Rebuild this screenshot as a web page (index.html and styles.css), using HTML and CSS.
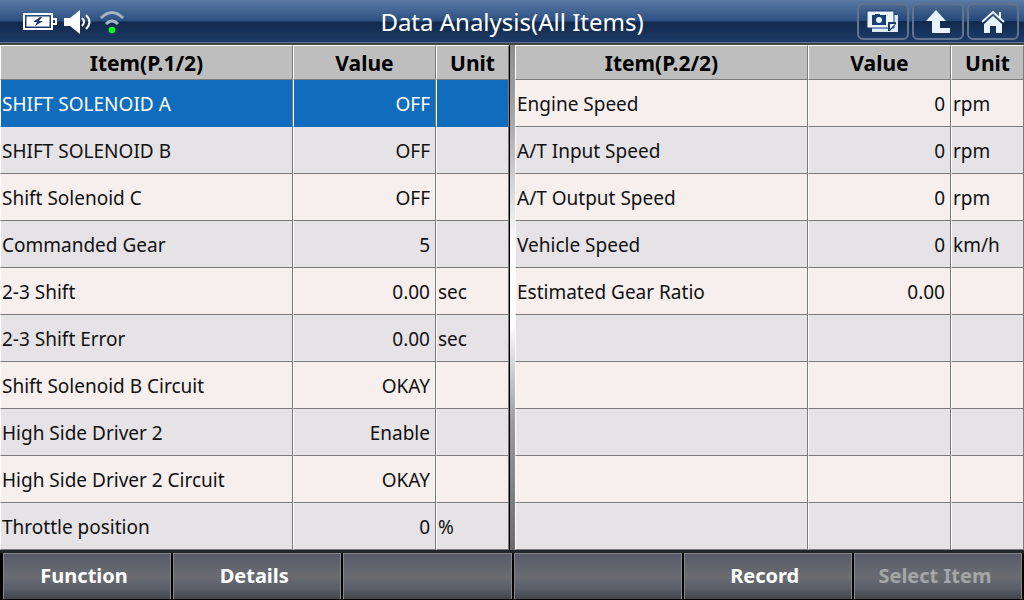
FILE: index.html
```html
<!DOCTYPE html>
<html lang="en">
<head>
    <meta charset="UTF-8">
    <title>Data Analysis</title>
    <link rel="stylesheet" href="styles.css">
</head>
<body>
<header class="top">
    <div class="status">
        <svg class="battery" width="34" height="18" viewBox="0 0 34 18">
            <rect x="1" y="1" width="28" height="15" fill="none" stroke="#fff" stroke-width="2"/>
            <rect x="3" y="3" width="24" height="11" fill="#fff" stroke="#1b3d70"/>
            <path d="M30 6h3v5h-3" fill="none" stroke="#fff" stroke-width="2"/>
            <path d="M17 4l-7 5h4l-2 4 8-5h-4l3-4z" fill="#1b3d70"/>
        </svg>
        <svg class="sound" width="28" height="24" viewBox="0 0 28 24">
            <path d="M0 8h6l10-8v24l-10-8H0z" fill="#fff"/>
            <path d="M18 8q4 4 0 8M22 5q7 7 0 14" fill="none" stroke="#fff" stroke-width="2"/>
        </svg>
        <svg class="wifi" width="28" height="24" viewBox="0 0 28 24">
            <path d="M2 8Q13-3 24 8M7 14q6-6 12 0" fill="none" stroke="#a6b4c9" stroke-width="3"/>
            <circle cx="13" cy="20" r="3.3" fill="#0f2"/>
        </svg>
    </div>
    <h1>Data Analysis(All Items)</h1>
    <nav class="tools">
        <button type="button" aria-label="Screenshots">
            <svg width="34" height="24" viewBox="0 0 34 24">
                <path d="M6 5h26v17H6z" fill="#dcebfa"/>
                <path d="M1 1h27v17H1z" fill="#e8f3fd" stroke="#1b3d70"/>
                <path d="M6 5h3V4h5v1h6v10H6z" fill="#1b3d70"/>
                <circle cx="13" cy="10" r="3" fill="#e8f3fd"/>
                <path d="M22 12h8v2l-6 7h-2z" fill="#1b3d70"/>
                <path d="M24 14h5l-5 5z" fill="#e8f3fd"/>
            </svg>
        </button>
        <button type="button" aria-label="Back">
            <svg width="26" height="26" viewBox="0 0 26 26">
                <path d="M11 1l10 11h-6v7h10v5H7V12H1z" fill="#e8f3fd"/>
            </svg>
        </button>
        <button type="button" aria-label="Home">
            <svg width="26" height="26" viewBox="0 0 26 26">
                <path d="M2 13L13 3l11 10M20 3v6" fill="none" stroke="#e8f3fd" stroke-width="2"/>
                <path d="M4 15l9-8 9 8v9h-6v-7h-6v7H4z" fill="#e8f3fd"/>
            </svg>
        </button>
    </nav>
</header>

<main class="data">
    <table>
        <colgroup><col><col class="col-value"><col class="col-unit"></colgroup>
        <thead>
            <tr><th>Item(P.1/2)</th><th>Value</th><th>Unit</th></tr>
        </thead>
        <tbody>
            <tr class="selected"><td>SHIFT SOLENOID A</td><td>OFF</td><td></td></tr>
            <tr><td>SHIFT SOLENOID B</td><td>OFF</td><td></td></tr>
            <tr><td>Shift Solenoid C</td><td>OFF</td><td></td></tr>
            <tr><td>Commanded Gear</td><td>5</td><td></td></tr>
            <tr><td>2-3 Shift</td><td>0.00</td><td>sec</td></tr>
            <tr><td>2-3 Shift Error</td><td>0.00</td><td>sec</td></tr>
            <tr><td>Shift Solenoid B Circuit</td><td>OKAY</td><td></td></tr>
            <tr><td>High Side Driver 2</td><td>Enable</td><td></td></tr>
            <tr><td>High Side Driver 2 Circuit</td><td>OKAY</td><td></td></tr>
            <tr><td>Throttle position</td><td>0</td><td>%</td></tr>
        </tbody>
    </table>
    <div class="divider"></div>
    <table>
        <colgroup><col><col class="col-value"><col class="col-unit"></colgroup>
        <thead>
            <tr><th>Item(P.2/2)</th><th>Value</th><th>Unit</th></tr>
        </thead>
        <tbody>
            <tr><td>Engine Speed</td><td>0</td><td>rpm</td></tr>
            <tr><td>A/T Input Speed</td><td>0</td><td>rpm</td></tr>
            <tr><td>A/T Output Speed</td><td>0</td><td>rpm</td></tr>
            <tr><td>Vehicle Speed</td><td>0</td><td>km/h</td></tr>
            <tr><td>Estimated Gear Ratio</td><td>0.00</td><td></td></tr>
            <tr><td></td><td></td><td></td></tr>
            <tr><td></td><td></td><td></td></tr>
            <tr><td></td><td></td><td></td></tr>
            <tr><td></td><td></td><td></td></tr>
            <tr><td></td><td></td><td></td></tr>
        </tbody>
    </table>
</main>

<footer class="actions">
    <button type="button">Function</button>
    <button type="button">Details</button>
    <button type="button" aria-label="Empty"></button>
    <button type="button" aria-label="Empty"></button>
    <button type="button">Record</button>
    <button type="button" disabled>Select Item</button>
</footer>
</body>
</html>
```
FILE: styles.css
```css
*{
    margin: 0;
    padding: 0;
    box-sizing: border-box;
}
body{
    min-height: 100vh;
    display: flex;
    flex-direction: column;
    background: #000;
    font-family: "Noto Sans", "DejaVu Sans", sans-serif;
    font-size: 19px;
    color: #111;
}
button{
    font: inherit;
    border: none;
    cursor: pointer;
}

/* top bar */
.top{
    height: 45px;
    display: grid;
    grid-template-columns: 1fr auto 1fr;
    align-items: center;
    padding: 0 5px 2px;
    background: linear-gradient(#5b7ba5 0, #2b4f80 21px, #12294c 22px, #1c3a66 42px, #5a6f96 42px, #5a6f96 43px, #444 43px);
}
.status{
    display: flex;
    align-items: center;
    gap: 7px;
    padding-left: 18px;
}
h1{
    font-size: 24px;
    font-weight: 400;
    color: #fff;
}
.tools{
    display: flex;
    justify-content: flex-end;
    gap: 3px;
}
.tools button{
    width: 52px;
    height: 37px;
    display: flex;
    align-items: center;
    justify-content: center;
    border: 2px solid #60738f;
    border-radius: 6px;
    background: linear-gradient(#4a6890, #24487a 48%, #12294c 50%, #1c3a66);
}

/* item tables */
.data{
    flex: 1;
    display: flex;
}
table{
    flex: 1;
    table-layout: fixed;
    border-collapse: separate;
    border-spacing: 0;
}
.col-value{
    width: 143px;
}
.col-unit{
    width: 73px;
}
th{
    height: 35px;
    background: #bebebe;
    font-size: 21px;
    font-weight: 700;
    line-height: 24px;
    color: #000;
    border: 1px solid #fff;
    border-right-color: #7b7b7b;
    border-bottom-color: #7b7b7b;
}
td{
    height: 47px;
    padding: 2px 2px 0 1px;
    line-height: 24px;
    white-space: nowrap;
    background: #f7eeee;
    border-left: 1px solid #fff;
    border-right: 1px solid #7b7b7b;
    border-bottom: 1px solid #7b7b7b;
}
td:nth-child(2){
    padding-right: 5px;
    text-align: right;
}
tbody tr:nth-child(even) td{
    background: #e6e3e6;
}
tbody .selected td{
    background: #106dbd;
    border-bottom-color: #106dbd;
    color: #fff;
}
.divider{
    width: 6px;
    border-left: 1px solid #000;
    background: linear-gradient(#8f8c90, #a9a6aa 15%, #fff 40%, #fff 55%, #9a989b 75%, #6b6b6b);
}

/* bottom buttons */
.actions{
    height: 50px;
    display: grid;
    grid-template-columns: repeat(6, 1fr);
    gap: 2px;
    padding: 3px 2px 1px 3px;
    background: linear-gradient(#22262b 3px, #000 3px);
}
.actions button{
    padding: 0 6px 2px 0;
    border: 1px solid #85878c;
    border-bottom: none;
    background: linear-gradient(#565b67, #6b6c72 50%, #5a5f69 75%, #43464b);
    font-size: 20px;
    font-weight: 700;
    color: #fff;
}
.actions button:disabled{
    color: #a5a6a8;
}
```
